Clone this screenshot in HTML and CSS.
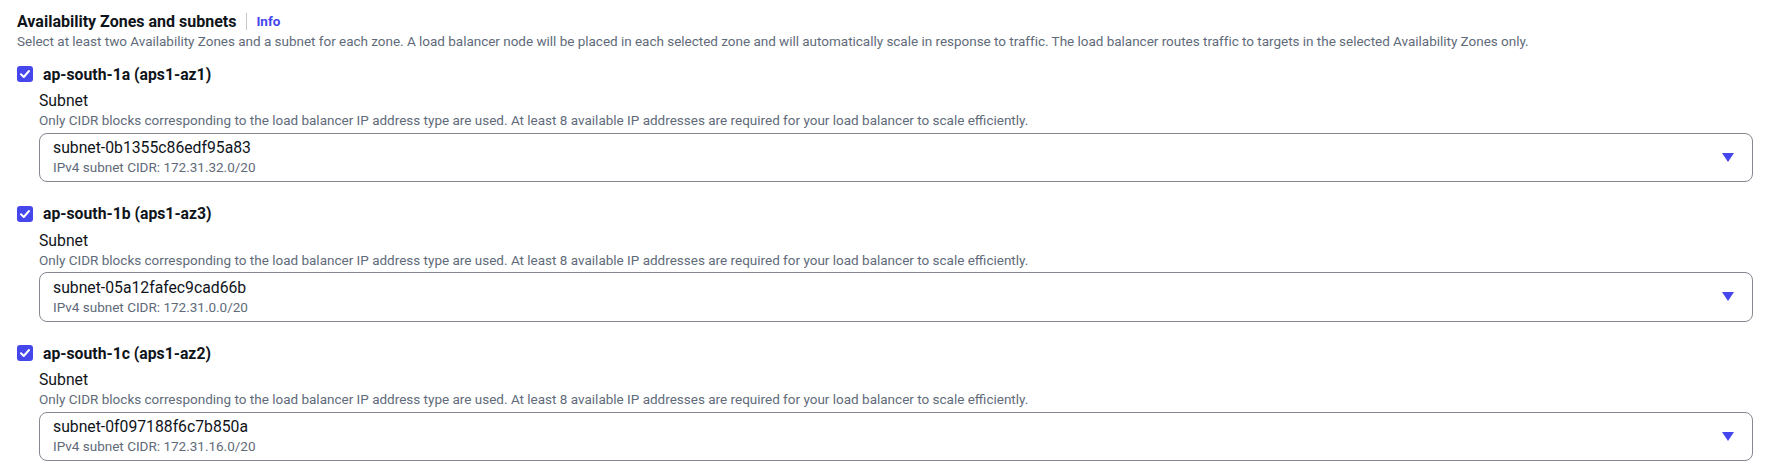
FILE: index.html
```html
<!DOCTYPE html>
<html lang="en">
<head>
<meta charset="utf-8">
<title>Availability Zones and subnets</title>
<link rel="stylesheet" href="styles.css">
</head>
<body>
<div class="field">
  <div class="field-title">
    <span class="title-text">Availability Zones and subnets</span>
    <span class="divider"></span>
    <a class="info" href="#">Info</a>
  </div>
  <div class="field-desc">Select at least two Availability Zones and a subnet for each zone. A load balancer node will be placed in each selected zone and will automatically scale in response to traffic. The load balancer routes traffic to targets in the selected Availability Zones only.</div>

  <div class="zones">
  <div class="zone">
    <label class="zone-check">
      <span class="checkbox"><svg viewBox="0 0 16 16" width="16" height="16"><path d="M4 8.2 L6.8 11 L12 5" fill="none" stroke="#fff" stroke-width="2" stroke-linecap="round" stroke-linejoin="round"/></svg></span>
      <span class="zone-name">ap-south-1a (aps1-az1)</span>
    </label>
    <div class="subnet">
      <div class="subnet-label">Subnet</div>
      <div class="subnet-hint">Only CIDR blocks corresponding to the load balancer IP address type are used. At least 8 available IP addresses are required for your load balancer to scale efficiently.</div>
      <div class="select">
        <div class="select-text">
          <div class="select-value">subnet-0b1355c86edf95a83</div>
          <div class="select-desc">IPv4 subnet CIDR: 172.31.32.0/20</div>
        </div>
        <svg class="caret" viewBox="0 0 12 9" width="12" height="9"><path d="M0 0 H12 L6 9 Z" fill="#4646ed"/></svg>
      </div>
    </div>
  </div>

  <div class="zone">
    <label class="zone-check">
      <span class="checkbox"><svg viewBox="0 0 16 16" width="16" height="16"><path d="M4 8.2 L6.8 11 L12 5" fill="none" stroke="#fff" stroke-width="2" stroke-linecap="round" stroke-linejoin="round"/></svg></span>
      <span class="zone-name">ap-south-1b (aps1-az3)</span>
    </label>
    <div class="subnet">
      <div class="subnet-label">Subnet</div>
      <div class="subnet-hint">Only CIDR blocks corresponding to the load balancer IP address type are used. At least 8 available IP addresses are required for your load balancer to scale efficiently.</div>
      <div class="select">
        <div class="select-text">
          <div class="select-value">subnet-05a12fafec9cad66b</div>
          <div class="select-desc">IPv4 subnet CIDR: 172.31.0.0/20</div>
        </div>
        <svg class="caret" viewBox="0 0 12 9" width="12" height="9"><path d="M0 0 H12 L6 9 Z" fill="#4646ed"/></svg>
      </div>
    </div>
  </div>

  <div class="zone">
    <label class="zone-check">
      <span class="checkbox"><svg viewBox="0 0 16 16" width="16" height="16"><path d="M4 8.2 L6.8 11 L12 5" fill="none" stroke="#fff" stroke-width="2" stroke-linecap="round" stroke-linejoin="round"/></svg></span>
      <span class="zone-name">ap-south-1c (aps1-az2)</span>
    </label>
    <div class="subnet">
      <div class="subnet-label">Subnet</div>
      <div class="subnet-hint">Only CIDR blocks corresponding to the load balancer IP address type are used. At least 8 available IP addresses are required for your load balancer to scale efficiently.</div>
      <div class="select">
        <div class="select-text">
          <div class="select-value">subnet-0f097188f6c7b850a</div>
          <div class="select-desc">IPv4 subnet CIDR: 172.31.16.0/20</div>
        </div>
        <svg class="caret" viewBox="0 0 12 9" width="12" height="9"><path d="M0 0 H12 L6 9 Z" fill="#4646ed"/></svg>
      </div>
    </div>
  </div>
  </div>
</div>
</body>
</html>
```
FILE: styles.css
```css
html, body {
  margin: 0;
  padding: 0;
  background: #ffffff;
}
body {
  font-family: Roboto, "Liberation Sans", Arial, sans-serif;
  color: #0f141a;
}
.field {
  padding: 10px 13px 0 17px;
}
.field-title {
  display: flex;
  align-items: center;
  height: 22px;
  font-size: 16px;
  font-weight: 700;
}
.divider {
  width: 1px;
  height: 17px;
  background: #c6c6cd;
  margin: 0 9px 0 10px;
}
.info {
  color: #4646ed;
  text-decoration: none;
  font-size: 13.5px;
  font-weight: 700;
}
.field-desc {
  font-size: 13.5px;
  line-height: 18px;
  color: #5f6b7a;
  letter-spacing: -0.02px;
}
.zones {
  display: flex;
  flex-direction: column;
  gap: 20.5px;
  margin-top: 13px;
}
.zone-check {
  display: flex;
  align-items: center;
  height: 22px;
  gap: 10px;
}
.checkbox {
  width: 16px;
  height: 16px;
  border-radius: 3px;
  background: #4646ed;
  display: flex;
}
.zone-name {
  font-size: 15.75px;
  font-weight: 700;
}
.subnet {
  padding-left: 22px;
  margin-top: 6px;
}
.subnet-label {
  font-size: 15.75px;
  line-height: 20px;
}
.subnet-hint {
  font-size: 13.5px;
  line-height: 18px;
  color: #5f6b7a;
}
.select {
  margin-top: 3.5px;
  height: 49.5px;
  box-sizing: border-box;
  border: 1px solid #878792;
  border-radius: 8px;
  display: flex;
  align-items: center;
  justify-content: space-between;
  padding: 0 18px 0 13px;
}
.select-value {
  font-size: 15.75px;
  line-height: 20px;
}
.select-desc {
  font-size: 13.5px;
  line-height: 18px;
  color: #5f6b7a;
}
.caret {
  display: block;
}
```
